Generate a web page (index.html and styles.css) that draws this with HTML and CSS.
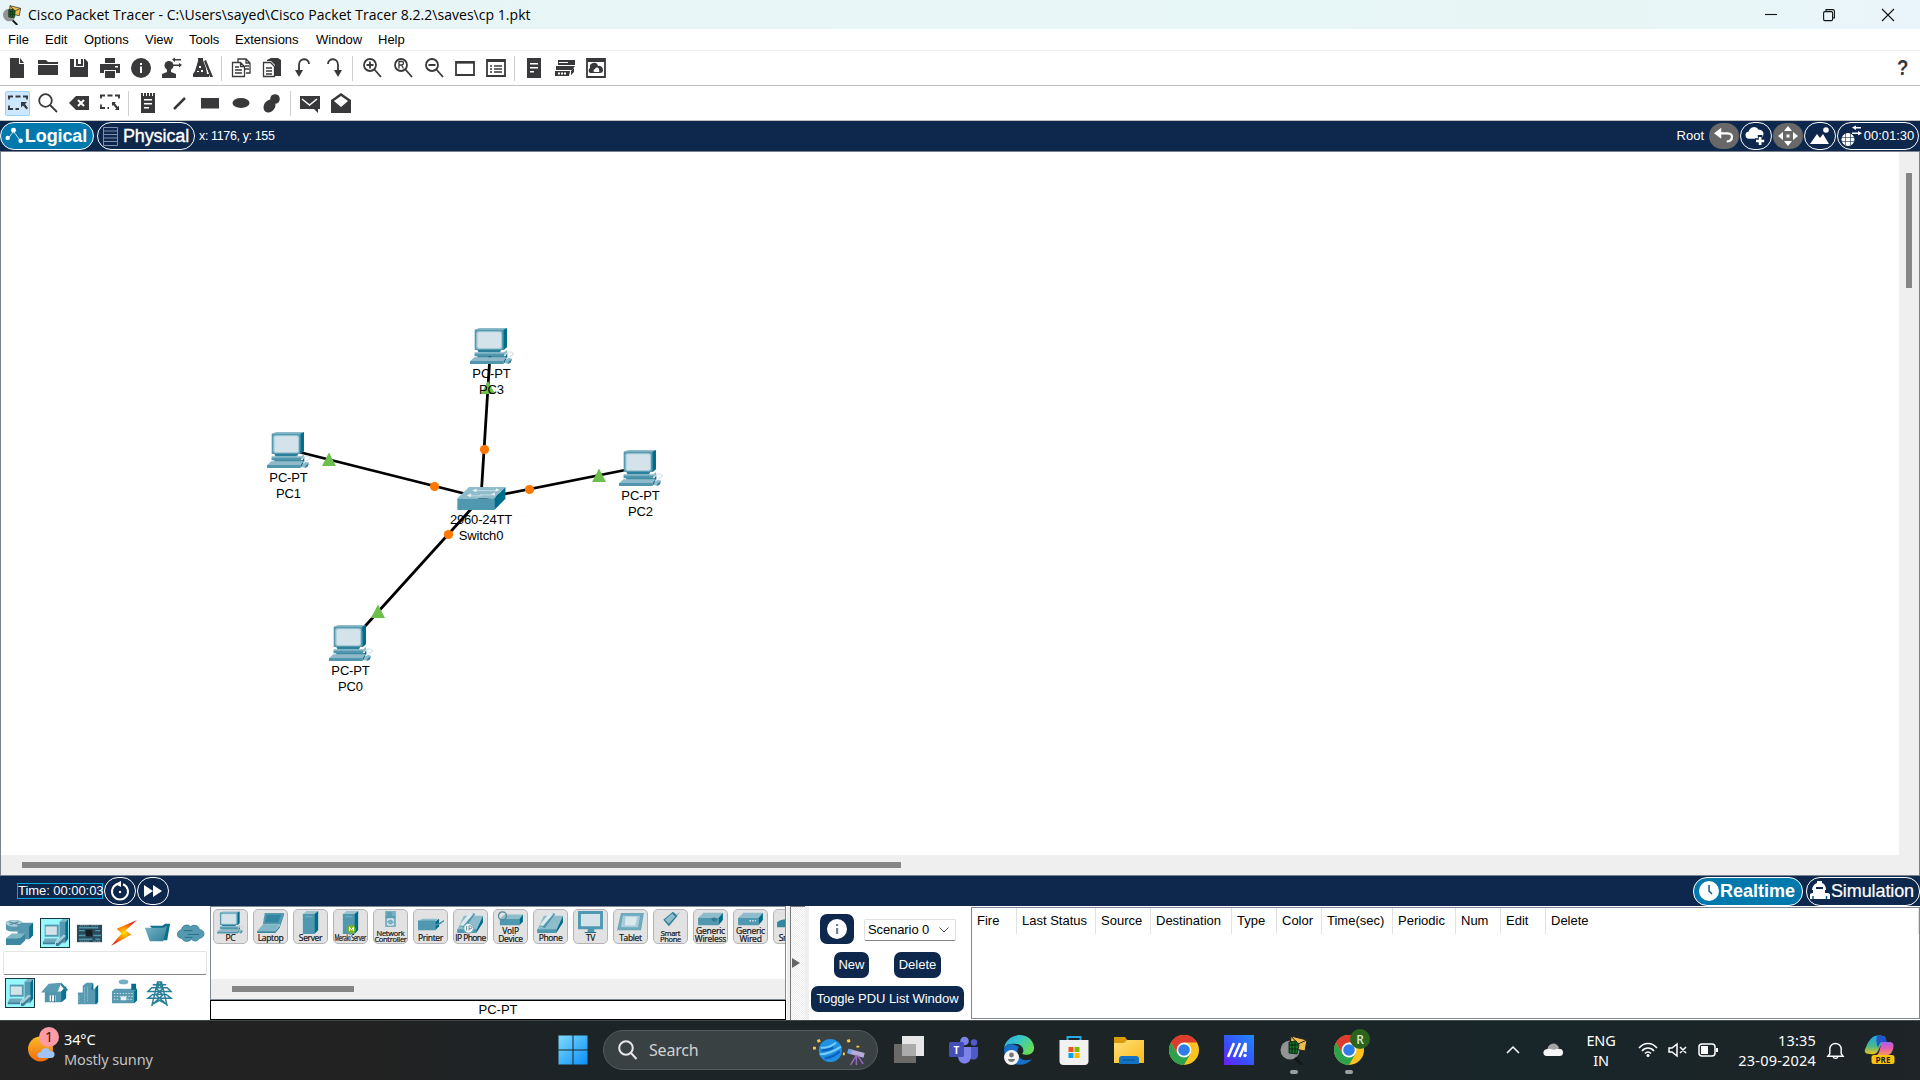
FILE: index.html
```html
<!DOCTYPE html>
<html lang="en">
<head>
<meta charset="utf-8">
<title>Cisco Packet Tracer</title>
<link rel="stylesheet" href="styles.css">
</head>
<body>
<svg class="defs" width="0" height="0" aria-hidden="true">
  <defs>
    <linearGradient id="lgTeal" x1="0" y1="0" x2="1" y2="1"><stop offset="0" stop-color="#79b4c6"/><stop offset="1" stop-color="#2d7f9a"/></linearGradient>
    <linearGradient id="lgWin" x1="0" y1="0" x2="1" y2="1"><stop offset="0" stop-color="#7fdcff"/><stop offset="1" stop-color="#0a8ef5"/></linearGradient>
    <linearGradient id="lgSun" x1="0" y1="0" x2="0" y2="1"><stop offset="0" stop-color="#fbb92a"/><stop offset="1" stop-color="#ef6c0f"/></linearGradient>
    <linearGradient id="lgFolder" x1="0" y1="0" x2="1" y2="1"><stop offset="0" stop-color="#ffe07a"/><stop offset="1" stop-color="#f9b918"/></linearGradient>
    <linearGradient id="lgM" x1="1" y1="0" x2="0" y2="1"><stop offset="0" stop-color="#1d8bff"/><stop offset=".6" stop-color="#3a4cf8"/><stop offset="1" stop-color="#6a1df5"/></linearGradient>
    <linearGradient id="lgEdge" x1="0" y1="0" x2="1" y2=".5"><stop offset="0" stop-color="#2aa8e8"/><stop offset=".5" stop-color="#38c7c8"/><stop offset="1" stop-color="#63dc5a"/></linearGradient>
    <linearGradient id="lgCopA" x1="0" y1="0" x2="0" y2="1"><stop offset="0" stop-color="#22a4ee"/><stop offset=".55" stop-color="#46b98a"/><stop offset="1" stop-color="#f3c21b"/></linearGradient>
    <linearGradient id="lgCopB" x1="0" y1="0" x2="0" y2="1"><stop offset="0" stop-color="#a95df0"/><stop offset=".5" stop-color="#e65fae"/><stop offset="1" stop-color="#f79a5c"/></linearGradient>
    <radialGradient id="rgBolt"><stop offset="0" stop-color="#ffe600"/><stop offset=".45" stop-color="#ff8a00"/><stop offset="1" stop-color="#e8281a"/></radialGradient>
    <symbol id="pc" viewBox="0 0 132 108">
      <path fill="#8fbccb" d="M14 6 27 0h84l-11 6z"/><path fill="#5799b0" d="M14 5h87v61H14z"/><path fill="#006e8a" d="M100 5l11-5v58l-11 9z"/>
      <rect x="19" y="10" width="77" height="53" rx="6" fill="#a6cbd7"/><rect x="23" y="13" width="70" height="47" rx="5" fill="#d3e3e9"/>
      <path fill="#2b809b" d="M22 66h72l-5 8H26z"/><path fill="#8fbccb" d="M14 73h88l9-7v9l-9 8H14z"/><path fill="#4f96ae" d="M14 77h88v8H14z"/><path fill="#12708c" d="M22 85h84l6-10v14H22z"/>
      <path fill="#8fb9c8" d="M13 88h96l-8 12H0z"/><path fill="#4f96ae" d="M0 99h101v9H0z"/><path fill="#17728e" d="M101 99l8-11v9l-8 11z"/>
      <path fill="#8fb9c8" d="M105 98l11-9 10 3-4 11-7 5-10-3z"/><path fill="#2b809b" d="M115 102l10-9-2 10-8 5z"/><path fill="none" stroke="#b8d3dd" stroke-width="2.5" d="M112 73c8-2 18-1 18 5 0 5-11 4-12 10"/>
    </symbol>
    <symbol id="switch" viewBox="0 0 148 70">
      <path fill="#8fbccb" d="M0 35 36 0h111l-34 35z"/><path fill="#4f98b0" d="M0 35h113v35H0z"/><path fill="#006e8a" d="M113 35 147 0v36l-34 34z"/>
      <path fill="none" stroke="#c3dbe3" stroke-width="3" d="M50 11h40M68 24h40M34 27h40M90 11h32"/><path fill="#e9f3f6" d="M60 5 46 10l12 6zM114 17l-11 5 12 5zM43 20l-14 5 12 6zM119 4l10 6-14 4z"/>
    </symbol>
    <symbol id="endpc" viewBox="0 0 30 30">
      <path fill="#80b7c8" d="M20 3l3-3h6v22l-3 4h-6z"/><path fill="#5799b0" d="M20 3h6v22h-6z"/><path fill="#006e8a" d="M26 4l3-4v21l-3 4z"/><path fill="#5799b0" d="M4 6h15v13H4z"/><rect x="5" y="8" width="12" height="9" fill="#d3e3e9"/><path fill="#71a9bc" d="M4 21h14l-3 4H2z"/><path fill="#417f98" d="M2 25h13v2H2zM16 26l9-8 2 2-8 9h-3z"/><path fill="#a9cdd8" d="M15 25l9-8 3 1-9 8z"/>
    </symbol>
    <symbol id="tower" viewBox="0 0 20 24"><path fill="#9bc3d0" d="M2 3l4-3h12l-4 3z"/><path fill="#4f98b0" d="M2 3h12v21H2z"/><path fill="#006e8a" d="M14 3l4-3v20l-4 4z"/><path stroke="#7db2c4" d="M4 6h8"/></symbol>
    <symbol id="box" viewBox="0 0 28 14"><path fill="#8fbccb" d="M0 6l6-6h22l-5 6z"/><path fill="#4f98b0" d="M0 6h23v8H0z"/><path fill="#006e8a" d="M23 6l5-6v8l-5 6z"/></symbol>
    <symbol id="phone" viewBox="0 0 28 24"><path fill="#8fbccb" d="M7 5h20l-7 15H0z"/><path fill="#4f98b0" d="M0 19h20v4H0z"/><path fill="#006e8a" d="M20 20 27 5v7l-7 11z"/><path fill="#4f98b0" d="M4 16 16 2l3 1L8 18z"/><path fill="#dce9ee" d="M3 14 14 1l3 2L6 16z"/></symbol>
    <symbol id="chrome" viewBox="0 0 30 30"><circle cx="15" cy="15" r="15" fill="#fcc31e"/><path fill="#de3a2e" d="M2 7.5A15 15 0 0 1 28 7.5H15L8.5 18.7z"/><path fill="#2da14c" d="M2 7.5A15 15 0 0 0 15 30l6.5-11.3L8.5 18.7z"/><circle cx="15" cy="15" r="7.4" fill="#fff"/><circle cx="15" cy="15" r="5.8" fill="#2f7de9"/></symbol>
    <symbol id="tracer" viewBox="0 0 30 30"><circle cx="11" cy="15" r="9.5" fill="#909493"/><path fill="#eebb50" stroke="#222" d="M12 1l16 4-2 11-15-3z"/><path fill="none" stroke="#222" d="M12 1l7 8 9-4"/><path fill="#0b7a22" stroke="#111" stroke-width=".8" d="M10 7l7-1 3 4-2 9-8-1z"/><path stroke="#111" stroke-width=".8" d="M13 7v11M16 7v11M10 10h9M10 14h9"/><path stroke="#161616" stroke-width="3" d="M16 23l7 7"/></symbol>
  </defs>
</svg>

<header class="titlebar">
  <svg class="appicon" viewBox="0 0 30 30"><use href="#tracer"/></svg>
  <h1>Cisco Packet Tracer - C:\Users\sayed\Cisco Packet Tracer 8.2.2\saves\cp 1.pkt</h1>
  <div class="wincontrols">
    <svg viewBox="0 0 12 12"><path d="M0 5.500h12"/></svg>
    <svg viewBox="0 0 12 12"><rect x=".6" y="2.6" width="9" height="9" rx="1.3"/><path d="M3 2.4V.6h6.8a1.6 1.6 0 0 1 1.6 1.6V9H9.8"/></svg>
    <svg viewBox="0 0 12 12"><path d="M0 0l12 12M12 0 0 12"/></svg>
  </div>
</header>

<nav class="menubar"><span class="m-file">File</span><span class="m-edit">Edit</span><span class="m-options">Options</span><span class="m-view">View</span><span class="m-tools">Tools</span><span class="m-ext">Extensions</span><span class="m-window">Window</span><span>Help</span></nav>

<div class="toolbar">
  <i class="tool"><svg viewBox="0 0 20 20"><path d="M3 0h9v6h5v14H3zM13 0l4 5h-4z"/></svg></i>
  <i class="tool"><svg viewBox="0 0 20 20"><path d="M0 2h8l2 2h10v2H0zM0 7h20v10H0z"/></svg></i>
  <i class="tool"><svg viewBox="0 0 20 20"><path d="M1 1h4v8h10V1h1l3 3v15H1zM7 1h2v5h3V1h2v7H7z"/></svg></i>
  <i class="tool"><svg viewBox="0 0 20 20"><path d="M5 0h10v5H5zM0 6h20v9h-4v-3H4v3H0zM5 13h10v7H5z"/><path class="cut" d="M15 8h3v1.5h-3z"/></svg></i>
  <i class="tool"><svg viewBox="0 0 20 20"><circle cx="10" cy="10" r="10"/><path class="cut" d="M9 5h2v2H9zM9 8.500h2V15H9z"/></svg></i>
  <i class="tool"><svg viewBox="0 0 20 20"><circle cx="7" cy="7.500" r="4.500"/><path d="M5 10h4v4l5 2v4H0v-4l5-2zM10 1.500l3-2v1.500h6v1.500h-6V4zM20 7l-3-2v1.500h-6V8h6v1.500z"/></svg></i>
  <i class="tool"><svg viewBox="0 0 20 20"><path d="M5 0h5v2l4 11 2 3v3H0v-3l2-3 3-10zM11 3l2-1 7 17h-3z"/><path class="cut" d="M6 8h2v2H6zM8 12h2v2H8zM4 13h2v1H4zM13 9l3 7h-2z"/></svg></i>
  <i class="sep"></i>
  <i class="tool"><svg viewBox="0 0 20 20"><path class="ln" d="M7 4V1h8l4 4v10h-4M1.500 4.500h8l4 4v10h-12zM15 1v4h4M9.500 4.500v4h4M4 9h4M4 12h7M4 15h7M14 8h4M14 11h4"/></svg></i>
  <i class="tool"><svg viewBox="0 0 20 20"><path d="M5 2l4-2h7l3 2v16h-6V7L9 3H5z"/><path class="ln" d="M1.500 4.500h7l4 4v10h-11zM4 10h6M4 13h6M4 16h6"/></svg></i>
  <i class="tool"><svg viewBox="0 0 20 20"><path class="ln2" d="M6 15V7c0-8 10-7 10-1"/><path d="M2 12h8l-4 7z"/></svg></i>
  <i class="tool"><svg viewBox="0 0 20 20"><path class="ln2" d="M14 15V7C14-1 4 0 4 6"/><path d="M10 12h8l-4 7z"/></svg></i>
  <i class="sep"></i>
  <i class="tool"><svg viewBox="0 0 20 20"><circle class="ln2" cx="8" cy="7" r="6"/><path class="ln2" d="M12 11l7 8M4.500 7h7M8 3.500v7"/></svg></i>
  <i class="tool"><svg viewBox="0 0 20 20"><circle class="ln2" cx="8" cy="7" r="6"/><path class="ln2" d="M12 11l7 8"/><path class="ln" d="M6 10.500v-7h3c2 0 2 3 0 3.500H6M8.500 7l2 3.500"/></svg></i>
  <i class="tool"><svg viewBox="0 0 20 20"><circle class="ln2" cx="8" cy="7" r="6"/><path class="ln2" d="M12 11l7 8M4.500 7h7"/></svg></i>
  <i class="tool"><svg viewBox="0 0 20 20"><path class="ln2" d="M1 4h18v13H1z"/><path class="ln" d="M1 5h18"/></svg></i>
  <i class="tool"><svg viewBox="0 0 20 20"><path class="ln2" d="M1 2h18v16H1zM1 3h18"/><path class="ln" d="M4 8h2M8 8h8M4 11h2M8 11h8M4 14h2M8 14h8"/></svg></i>
  <i class="sep"></i>
  <i class="tool"><svg viewBox="0 0 20 20"><path d="M3 0h14v20H3z"/><path class="cut" d="M6 5h8v1.500H6zM6 9h8v1.500H6zM6 13h4v1.500H6z"/></svg></i>
  <i class="tool"><svg viewBox="0 0 20 20"><path d="M3 2h17v5H3zM1 8h19l-3 4H1zM0 13h15l-1 5H0zM16 13l3-3v4l-3 3z"/><path class="cut" d="M4 4h9v1H4zM3 14.500h2v2H3zM6 14.500h2v2H6zM9 14.500h2v2H9z"/></svg></i>
  <i class="tool"><svg viewBox="0 0 20 20"><path class="ln2" d="M1 1h18v18H1zM1 3h18"/><path d="M4 15a3 3 0 0 1 0-5 4 4 0 0 1 8-2 4 4 0 0 1 5 4c0 2-1 3-3 3z"/><path class="cut" d="M8 14a2 2 0 0 1 1-3 2 2 0 0 1 4 1 1.500 1.500 0 0 1 0 2z"/></svg></i>
  <b class="help">?</b>
</div>

<div class="toolbar second">
  <i class="tool selected"><svg viewBox="0 0 20 20"><path class="ln2 dash" d="M0 3.500h20M0 16h11"/><path class="ln2" d="M1 3v3.500M1 12.500v4M19 3v3.500"/><path d="M13 9h6l-2 2 3 4-1.500 1.500-3.500-4-2 2z"/></svg></i>
  <i class="tool"><svg viewBox="0 0 20 20"><circle class="ln2" cx="7.500" cy="7.500" r="6.300"/><path class="ln2" d="M12 12l7 7"/></svg></i>
  <i class="tool"><svg viewBox="0 0 20 20"><path d="M0 10l7-7h13v14H7z"/><path class="x" d="M9 7l6 6M15 7l-6 6"/></svg></i>
  <i class="tool"><svg viewBox="0 0 20 20"><path class="ln2 dash" d="M0 2.500h20M0 15h9"/><path class="ln2" d="M1 2v3.500M1 11.500v4M19 2v3.500"/><path d="M12 9h4l-1.200 1.200 3 3.800L19 12.500V17h-4l1.200-1.500-3-3.500L12 13z"/></svg></i>
  <i class="sep"></i>
  <i class="tool"><svg viewBox="0 0 20 20"><path d="M3 0h2v3h1V0h2v3h1V0h2v3h1V0h2v3h1V0h2v20H3z"/><path class="cut" d="M6 6h8v1.500H6zM6 10h8v1.500H6zM6 14h5v1.500H6z"/></svg></i>
  <i class="tool"><svg viewBox="0 0 20 20"><path class="ln3" d="M5 16 16 5"/></svg></i>
  <i class="tool"><svg viewBox="0 0 20 20"><path d="M1 5h18v10.500H1z"/></svg></i>
  <i class="tool"><svg viewBox="0 0 20 20"><ellipse cx="10" cy="10" rx="8.500" ry="5"/></svg></i>
  <i class="tool"><svg viewBox="0 0 20 20"><circle cx="13" cy="6" r="4.800"/><ellipse cx="7.500" cy="13" rx="7" ry="5.500" transform="rotate(-55 7.500 13)"/></svg></i>
  <i class="sep"></i>
  <i class="tool"><svg viewBox="0 0 20 20"><path d="M0 3h20v13h-2v4l-4-4H0z"/><path class="cutln" d="M2 6l7.500 6L17 6"/></svg></i>
  <i class="tool"><svg viewBox="0 0 20 20"><path d="M0 7l10-7 10 7v13H0z"/><path class="cut" d="M3 8l7-5 7 5-7 6z"/></svg></i>
</div>

<div class="navbar">
  <div class="pill active logical"><svg viewBox="0 0 20 18"><path class="wl" d="M4 11 9 4l7 10"/><circle cx="2.800" cy="11" r="2.300"/><circle cx="9" cy="3" r="2.600"/><circle cx="16.500" cy="14" r="2.400"/></svg><b>Logical</b></div>
  <div class="pill physical"><svg viewBox="0 0 15 19"><path class="rack" d="M.5.5h14v18H.5zM.5 4h14M.5 7.500h14M.5 11h14M.5 14.500h14"/></svg><span>Physical</span></div>
  <span class="coords">x: 1176, y: 155</span>
  <div class="navright">
    <span class="root">Root</span>
    <div class="pill gray"><svg viewBox="0 0 22 18"><path class="wl3" d="M6 6h9c7 0 6 9-1 9"/><path d="M0 6l8-6v12z"/></svg></div>
    <div class="pill icon"><svg viewBox="0 0 22 20"><path d="M4 13a4 4 0 0 1-1-8 6 6 0 0 1 11-2c4 0 6 3 5 6-1 3-2 4-5 4z"/><path class="plusgap" d="M15.500 9v11M10 15h11"/><path class="plus" d="M15.500 11v9M11 15.500h9"/></svg></div>
    <div class="pill gray"><svg viewBox="0 0 20 20"><path d="M10 0l4 5H6zM10 20l4-5H6zM0 10l5-4v8zM20 10l-5-4v8zM8.500 8.500h3v3h-3z"/></svg></div>
    <div class="pill icon"><svg viewBox="0 0 20 18"><path d="M0 17 7 7l3 4 3-4 6 10z"/><circle cx="16" cy="3" r="2.800"/></svg></div>
    <div class="pill clock"><svg viewBox="0 0 20 20"><circle cx="6" cy="13.500" r="6.500"/><path class="globe" d="M0 11.500h12M0 15.500h12M3.500 7v12M8.500 7v12"/><path d="M10 1.500l4-2V1h5v1.400h-5V4zM20 7.200l-4-2.300v1.500h-6v1.500h6v1.500z"/></svg><span>00:01:30</span></div>
  </div>
</div>

<main class="workspace">
  <div class="canvas">
    <svg class="links" width="1897" height="703" viewBox="1 152 1897 703">
      <path class="cable" d="M285 448.500 482 498M490 355 481 498M638 467.500 482 498.500M348 645 482 497"/>
      <g fill="#ff7800"><circle cx="434.500" cy="486.500" r="4.600"/><circle cx="484.500" cy="449.500" r="4.600"/><circle cx="529.500" cy="489.500" r="4.600"/><circle cx="448.500" cy="534.500" r="4.600"/></g>
      <path fill="#6cbf4b" d="M329 452.500l7 13.500h-14zM488 381l7 13h-14zM599 468.500l7 13.500h-14zM378 604.500l7 13.500h-14z"/>
    </svg>
    <div class="node n-pc3"><svg viewBox="0 0 132 108"><use href="#pc"/></svg><span>PC-PT</span><span>PC3</span></div>
    <div class="node n-pc1"><svg viewBox="0 0 132 108"><use href="#pc"/></svg><span>PC-PT</span><span>PC1</span></div>
    <div class="node n-pc2"><svg viewBox="0 0 132 108"><use href="#pc"/></svg><span>PC-PT</span><span>PC2</span></div>
    <div class="node n-pc0"><svg viewBox="0 0 132 108"><use href="#pc"/></svg><span>PC-PT</span><span>PC0</span></div>
    <div class="node n-sw"><svg viewBox="0 0 148 70"><use href="#switch"/></svg><span>2960-24TT</span><span>Switch0</span></div>
  </div>
  <div class="vtrack"><div class="vthumb"></div></div>
  <div class="htrack"><div class="hthumb"></div></div>
</main>

<div class="timebar">
  <span class="time">Time: 00:00:03</span>
  <div class="pill icon"><svg viewBox="0 0 20 20"><path class="wl2" d="M7 3.200A8 8 0 1 0 13 3.200"/><path d="M5 3l6-3v6z"/><circle cx="10" cy="11" r="1.200"/></svg></div>
  <div class="pill icon"><svg viewBox="0 0 20 20"><path d="M1 4l9 6-9 6zM10 4l9 6-9 6z"/></svg></div>
  <div class="modes">
    <div class="pill active realtime"><svg viewBox="0 0 20 20"><circle cx="10" cy="10" r="10"/><path class="hands" d="M10 4v6l3 3"/></svg><b>Realtime</b></div>
    <div class="pill simulation"><svg viewBox="0 0 20 20"><path fill-rule="evenodd" d="M7 0h5v2c3 1 4 4 4 7h-1v3h3l2 1v5H0v-5l2-1h1V9H2c0-3 2-6 5-7zM6 6v2h7V6z"/><path class="hands" d="M3 15v3M16.500 15v3"/></svg><span>Simulation</span></div>
  </div>
</div>

<section class="bottom">
  <div class="categories">
    <div class="catrow">
      <i class="c35"><svg viewBox="0 0 30 30"><path fill="#5799b0" d="M1 4c0-4 17-4 17 0v6c0 4-17 4-17 0z"/><ellipse cx="9.500" cy="4.500" rx="8.500" ry="3.500" fill="#a9cdd8"/><path stroke="#487f91" d="M4 3l11 3M5 6l9-3"/><path fill="#5799b0" d="M13 7l4-3h12v12l-4 5H13z"/><path fill="#0e718d" d="M25 8l4-4v13l-4 4z"/><path fill="#80b7c8" d="M1 20l6-5h14l-5 5z"/><path fill="#3d89a3" d="M1 20h15v7H1zM16 20l5-5v7l-5 5z"/></svg></i>
      <i class="c35 on"><svg viewBox="0 0 30 30"><use href="#endpc"/></svg></i>
      <i class="c35"><svg viewBox="0 0 30 30"><path fill="#294b5b" d="M2 6h26v18H2z"/><path stroke="#4f98b0" stroke-width="1.500" d="M4 9h20M4 12h6M4 17h9M4 21h14M21 12h5M19 17h8M21 21h5"/><path fill="#171f25" d="M11 11h7v7h-7z"/><path stroke="#9ab8c0" stroke-dasharray="1 1" d="M5 7h9M17 7h8M5 23h10M19 23h8"/></svg></i>
      <i class="c33"><svg viewBox="0 0 30 30"><path fill="url(#rgBolt)" d="M29 1 8 10l5 5L2 28l21-12-6-4z"/></svg></i>
      <i class="c34"><svg viewBox="0 0 30 30"><path fill="#0b6f8b" d="M7 7h13l3-2h5l-3 17h-4z"/><path fill="url(#lgTeal)" d="M2 9h19l4-2-4 16H7z"/></svg></i>
      <i class="c34"><svg viewBox="0 0 30 30"><path fill="#5799b0" stroke="#35809a" d="M5 20c-6 0-6-8 0-9 0-5 7-6 9-3 4-3 9-1 9 3 6 0 7 8 0 9-2 4-6 3-8 1-3 3-8 3-10-1z"/><path stroke="#256f8a" d="M7 12h9M11 16h12M8 19h8"/></svg></i>
    </div>
    <div class="filter"></div>
    <div class="catrow lower">
      <i class="c35 on"><svg viewBox="0 0 30 30"><use href="#endpc"/></svg></i>
      <i class="c35"><svg viewBox="0 0 30 30"><path fill="#4f98b0" d="M5 13h17l5-6v13l-5 4H5z"/><path fill="#0e718d" d="M22 13l5-5v12l-5 4z"/><path fill="#2b7d99" d="M22 4l7 7-2 2-6-7z"/><path fill="#5a9cb2" d="M1 14 9 5l13-1-4 10z"/><path fill="#fff" d="M10 17h6v6h-6z"/><path stroke="#35738b" d="M12 17v6M15 17v7"/></svg></i>
      <i class="c35"><svg viewBox="0 0 30 30"><path fill="#5799b0" d="M3 14h8v12H3zM8 7l4-3h6v22H8zM16 10h7v16h-7z"/><path fill="#006e8a" d="M18 4l1 1v5l-2 2zM21 9l3-3v18l-3 2z"/><path stroke="#a9cdd8" stroke-dasharray="1 1" d="M10 9v15M13 8v16M4 17v7"/></svg></i>
      <i class="c35"><svg viewBox="0 0 30 30"><ellipse cx="14" cy="3" rx="5" ry="2.500" fill="#75afc1"/><path fill="#5799b0" d="M2 13l3-3h23v12l-3 3H2z"/><path fill="#006e8a" d="M22 5h5v6h-5zM25 13l3-3v12l-3 3z"/><path stroke="#cce0e7" stroke-dasharray="1.500 1.500" d="M4 15h20M4 18h20M4 21h6M18 21h6"/><path fill="#e9f1f4" d="M11 18h6v4h-6z"/></svg></i>
      <i class="c35"><svg viewBox="0 0 30 30"><path fill="none" stroke="#277f98" stroke-width="1.500" d="M7 28 13 3l4 0 6 25M8 6l14 0M3 13h24l-4-4H7zM3 20h24l-5-4H8zM12 10l6 6M18 10l-6 6M11 16l10 9M19 16 9 25M8 26l7-4 7 4M13 4l5 5M17 4l-5 5"/></svg></i>
    </div>
  </div>

  <div class="devices">
    <div class="tiles">
      <div class="tile"><svg viewBox="0 0 28 24"><use href="#pc"/></svg><span>PC</span></div>
      <div class="tile"><svg viewBox="0 0 28 24"><path fill="#5799b0" d="M8 2h20l-4 12H6z"/><path fill="#3286a1" d="M10 4h15l-3 8H8z"/><path fill="#006e8a" d="M28 2v2l-4 12v-2z"/><path fill="#80b7c8" d="M6 14h18l-5 7H0z"/><path fill="#3585a0" d="M0 21h19v2H0zM19 21l5-6v2l-5 6z"/></svg><span>Laptop</span></div>
      <div class="tile"><svg viewBox="0 0 20 24"><use href="#tower"/></svg><span>Server</span></div>
      <div class="tile"><svg viewBox="0 0 20 24"><use href="#tower"/><circle cx="11" cy="19" r="4.500" fill="#7cb518"/><path fill="none" stroke="#fff" d="M9 21v-4l2 3 2-3v4"/></svg><span class="tight">Meraki Server</span></div>
      <div class="tile two"><svg viewBox="0 0 20 24"><path fill="#75afc1" d="M2 0h16v24H2z"/><path fill="none" stroke="#2c7f9a" d="M4 3h8M4 6h8M2 9h16"/><path fill="none" stroke="#fff" stroke-width="1.500" d="M6 15v-3h8v4M14 18v3H6v-4"/></svg><span class="small">Network<br>Controller</span></div>
      <div class="tile"><svg viewBox="0 0 28 24"><path fill="#8fbccb" d="M1 10l5-2h16l-4 3z"/><path fill="#4f98b0" d="M1 10h18v10H1z"/><path fill="#006e8a" d="M19 11l4-3v8l-4 4z"/><path stroke="#4f98b0" stroke-width="1.500" d="M19 15l5-2 4-3"/></svg><span>Printer</span></div>
      <div class="tile"><svg viewBox="0 0 28 24"><use href="#phone"/><circle cx="12" cy="18" r="5" fill="#fff" stroke="#6aa5b8"/><path stroke="#4d8498" fill="none" d="M10 15.500v5M12.500 20.500v-5h1.500a1 1 0 0 1 0 3h-1.500"/></svg><span class="mid">IP Phone</span></div>
      <div class="tile two"><svg viewBox="0 0 28 18"><path fill="#8fbccb" d="M2 9l5-5h21l-4 5z"/><path fill="#4f98b0" d="M2 9h22v7H2z"/><path fill="#006e8a" d="M24 9l4-5v8l-4 4z"/><circle cx="5" cy="5.500" r="4.500" fill="none" stroke="#50879a" stroke-width="1.500"/></svg><span>VoIP<br>Device</span></div>
      <div class="tile"><svg viewBox="0 0 28 24"><use href="#phone"/></svg><span>Phone</span></div>
      <div class="tile"><svg viewBox="0 0 28 24"><path fill="#4f98b0" d="M1 0h26v19H1zM11 19h7v3h-7z"/><path fill="#d3e3e9" d="M4 3h20v13H4z"/><path fill="#206f8a" d="M8 22h12v1H8z"/></svg><span>TV</span></div>
      <div class="tile"><svg viewBox="0 0 28 24"><path fill="#6eaabd" d="M4 2h24l-3 18H0z"/><path fill="#a9cdd8" d="M6 5h18l-2 12H4z"/><path fill="#dbe8ed" d="M9 6h12l-2 9H8z"/></svg><span>Tablet</span></div>
      <div class="tile two"><svg viewBox="0 0 28 20"><path fill="#2b809b" d="M5 11 17 1l6 5-11 13z"/><path fill="#8fbccb" d="M7 11l9-8 4 4-8 9z"/><path stroke="#6c98a7" d="M21 6l4-4"/></svg><span class="small">Smart<br>Phone</span></div>
      <div class="tile two"><svg viewBox="0 0 28 18"><use href="#box"/><path stroke="#1d6176" d="M16 8v3M18 7v5M20 8v3"/></svg><span>Generic<br>Wireless</span></div>
      <div class="tile two"><svg viewBox="0 0 28 18"><use href="#box"/><path stroke="#e3eef2" stroke-width="1.500" stroke-dasharray="1.500 1.500" d="M13 11h7"/></svg><span>Generic<br>Wired</span></div>
      <div class="tile"><svg viewBox="0 0 28 24"><path fill="#3286a1" d="M0 12c2-5 24-5 26 0v5H0z"/></svg><span>Sniffer</span></div>
    </div>
    <div class="dtrack"><div class="dthumb"></div></div>
    <div class="devname">PC-PT</div>
  </div>

  <div class="splitter"><i></i></div>

  <div class="scenario">
    <div class="srow first"><div class="infobtn"><svg viewBox="0 0 20 20"><circle cx="10" cy="10" r="10" fill="#fff"/><path fill="#718096" d="M9 5h2.200v2H9zM9 9h2.200v6H9z"/></svg></div>
      <div class="select"><span>Scenario 0</span><svg viewBox="0 0 10 6"><path d="M.5.5 5 5 9.500.5"/></svg></div></div>
    <div class="srow second"><button class="btn new">New</button><button class="btn del">Delete</button></div>
    <button class="btn toggle">Toggle PDU List Window</button>
  </div>

  <div class="pdu"><span>Fire</span><span>Last Status</span><span>Source</span><span>Destination</span><span>Type</span><span>Color</span><span>Time(sec)</span><span>Periodic</span><span>Num</span><span>Edit</span><span>Delete</span></div>
</section>

<footer class="taskbar">
  <div class="weather">
    <svg viewBox="0 0 33 36"><circle cx="13.500" cy="22" r="12.500" fill="url(#lgSun)"/><path fill="#9fc2f7" d="M14 31c-5 0-5-6 0-6 1-5 8-5 9-1 6-1 6 7 1 7z"/><circle cx="22" cy="10" r="10" fill="#fe9aa4"/><text x="22" y="15" text-anchor="middle">1</text></svg>
    <div><p>34°C</p><p class="dim">Mostly sunny</p></div>
  </div>
  <div class="apps">
    <i class="app"><svg viewBox="0 0 30 30"><path fill="url(#lgWin)" d="M.5.5h14v14H.5zM15.500.5h14v14h-14zM.5 15.500h14v14H.5zM15.500 15.500h14v14h-14z"/></svg></i>
    <div class="search"><svg class="mag" viewBox="0 0 20 20"><circle cx="8" cy="8" r="6.800"/><path d="M13 13l5.500 6"/></svg><span>Search</span>
      <svg class="planet" viewBox="0 0 56 30"><circle cx="18" cy="15" r="12" fill="#2090e2"/><path fill="none" stroke="#74d0fb" stroke-width="2" d="M8 12c7 1 11-2 16-5M7 19c9 0 16-4 22-8"/><path fill="none" stroke="#0c63bd" stroke-width="2.500" d="M9 15c5 0 9-1 12-3M12 23c6 0 12-4 16-7"/><path fill="#f9c846" d="M4 4l3-1 1 3-3 1zM0 11h3v3H0zM35 4l3-1 1 3-3 1zM45 10h3v2h-3zM31 17h2v3h-2z"/><path stroke="#b6a9dc" stroke-width="5" d="M38 16l15 4"/><path stroke="#6da1ec" stroke-width="5" d="M36 15.500l4 1"/><path fill="none" stroke="#956cc0" stroke-width="1.500" d="M45 20l-6 10M45 20v10M46 20l6 9"/></svg></div>
    <i class="app"><svg viewBox="0 0 30 30"><path fill="#6c6a69" d="M0 9h22v19H0z"/><path fill="#e6e6e6" d="M8 1h22v20H8z"/><path fill="#ababab" d="M8 9h14v12H8z"/></svg></i>
    <i class="app"><svg viewBox="0 0 30 30"><circle cx="15.500" cy="6" r="4.300" fill="#7b83eb"/><circle cx="25" cy="7.500" r="3.200" fill="#5059c9"/><path fill="#5059c9" d="M20 12h9v8c0 6-8 6-9 1z"/><path fill="#7b83eb" d="M9 12h13v9c0 10-13 10-13 0z"/><rect y="7" width="15" height="15" rx="1.500" fill="#464eb8"/><text class="tm" x="7.500" y="18.500" text-anchor="middle">T</text></svg></i>
    <i class="app"><svg viewBox="0 0 30 30"><path fill="#176fc9" d="M0 15C0 9 9 7 15 12c-3 4-2 11 5 13 4 1 7-1 8-1C21 34 1 31 0 15z"/><path fill="url(#lgEdge)" d="M0 13C3-4 28-4 30 12c1 7-7 9-12 7 3-3 1-9-5-10C7 8 2 9 0 13z"/><circle cx="7.500" cy="22.500" r="7.500" fill="#f5f5f5"/><circle cx="7.500" cy="20" r="2.400" fill="#777"/><path fill="#777" d="M4 24h7c0 4-7 4-7 0z"/></svg></i>
    <i class="app"><svg viewBox="0 0 30 30"><path fill="none" stroke="#28a8e8" stroke-width="2" d="M8.500 7V2h13v5"/><path fill="#f1f1f1" d="M.5 5h29v21a4 4 0 0 1-4 4h-21a4 4 0 0 1-4-4z"/><path fill="#f25022" d="M9.500 12h5v5h-5z"/><path fill="#7fba00" d="M15.500 12h5v5h-5z"/><path fill="#00a4ef" d="M9.500 18h5v5h-5z"/><path fill="#ffb900" d="M15.500 18h5v5h-5z"/></svg></i>
    <i class="app"><svg viewBox="0 0 30 30"><path fill="#d99a0c" d="M0 2h11l3 4h14v8H0z"/><path fill="url(#lgFolder)" d="M0 8h10l3-3h17v23H0z"/><path fill="#1273c4" d="M5 24a3 3 0 0 1 3-3h14a3 3 0 0 1 3 3v5H5z"/><path stroke="#0b4e8e" d="M9 25h12"/></svg></i>
    <i class="app"><svg viewBox="0 0 30 30"><use href="#chrome"/></svg></i>
    <i class="app"><svg viewBox="0 0 30 30"><path fill="url(#lgM)" d="M0 0h30v30H0z"/><path fill="none" stroke="#fff" stroke-width="2.600" d="M4 22 10 8M10 22l6-14M15.500 22l6-14v9"/><circle cx="21" cy="20.500" r="1.700" fill="#fff"/></svg></i>
    <i class="app running"><svg viewBox="0 0 30 30"><use href="#tracer"/></svg></i>
    <i class="app running"><svg viewBox="0 0 30 30"><use href="#chrome" width="30" height="30"/><circle cx="26" cy="4" r="10" fill="#2b641d"/><text class="rb" x="26" y="8.500" text-anchor="middle">R</text></svg></i>
  </div>
  <div class="tray">
    <svg class="chev" viewBox="0 0 14 8"><path d="M1 7l6-6 6 6"/></svg>
    <svg class="cloud" viewBox="0 0 20 14"><path fill="#a5a5a5" d="M4 9C4-1 14-2 16 5l-6 4z"/><path fill="#f6f6f6" d="M4 13c-5 0-5-7 1-7 3-1 5 2 8 0 4-1 7 0 7 3 0 3-1 4-4 4z"/></svg>
    <div class="lang">ENG<br>IN</div>
    <svg class="wifi" viewBox="0 0 20 16"><path d="M1 6C6 0 14 0 19 6M4 9C7 5 13 5 16 9M7 11.500c2-2 4-2 6 0"/><circle cx="10" cy="13.500" r="1.500"/></svg>
    <svg class="vol" viewBox="0 0 20 14"><path d="M1 5h3l5-4v12l-5-4H1zM12 4l6 6M18 4l-6 6"/></svg>
    <svg class="bat" viewBox="0 0 20 14"><rect x="1" y="1" width="16" height="12" rx="3"/><path class="fill" d="M3 3h7v8H3zM18 5h2v4h-2z"/></svg>
    <div class="clocktext">13:35<br>23-09-2024</div>
    <svg class="bell" viewBox="0 0 18 19"><path d="M3 13V8a6 6 0 0 1 12 0v5l2 2.500H1zM6.500 16c.5 2.500 4.500 2.500 5 0"/></svg>
    <svg class="copilot" viewBox="0 0 30 30"><path fill="url(#lgCopA)" d="M8 2c2-2 10-2 12 0 2 2-3 5-6 12-2 5-5 6-9 5-6 0-6-3-4-7C3 7 5 4 8 2z"/><path fill="#2354c9" d="M12 1h5c4 0 4 4 5 6h-5c-2 0-3 3-4 6-2-5-2-9-1-12z"/><path fill="url(#lgCopB)" d="M18 7h7c4 0 4 4 3 7-1 4-3 6-6 6H12c4-3 3-13 6-13z"/><rect x="6.500" y="20" width="23" height="9" rx="2.500" fill="#fcc40c"/><text x="18" y="27.500" text-anchor="middle">PRE</text></svg>
  </div>
</footer>
</body>
</html>
```

FILE: styles.css
```css
* { box-sizing: border-box; }
body {
  margin: 0; width: 1920px; height: 1080px; overflow: hidden;
  display: flex; flex-direction: column;
  font: 13px/16px "Liberation Sans", Arial, sans-serif; color: #000; background: #fff;
}
svg { display: block; flex: none; overflow: visible; }
i { font-style: normal; flex: none; }
p, h1 { margin: 0; }
.defs { position: absolute; }

.titlebar { height: 29px; flex: none; display: flex; align-items: center; padding-left: 2px; background: linear-gradient(90deg, #e8f5f8, #e7f6f5 85%, #eaf5fb); }
.appicon { width: 20px; height: 20px; }
.titlebar h1 { margin-left: 6px; font: 400 14px/20px "Open Sans", "Noto Sans", sans-serif; letter-spacing: .04px; white-space: nowrap; }
.wincontrols { margin-left: auto; display: flex; gap: 46.500px; padding-right: 26px; }
.wincontrols svg { width: 12px; height: 12px; fill: none; stroke: #111; stroke-width: 1.100; }
.wincontrols svg:nth-child(2) { margin: 0 .5px 0 -.5px; }

.menubar { height: 22px; flex: none; display: flex; align-items: center; padding: 1px 0 0 8px; border-bottom: 1px solid #ededed; }
.m-file { width: 37px; } .m-edit { width: 39px; } .m-options { width: 61px; } .m-view { width: 44px; }
.m-tools { width: 46px; } .m-ext { width: 81px; } .m-window { width: 62px; }

.toolbar { height: 35px; flex: none; display: flex; align-items: center; padding-left: 1px; border-bottom: 1px solid #bfbfbf; }
.tool { width: 31px; height: 26px; display: grid; place-items: center; }
.tool svg { width: 20px; height: 20px; fill: #39393b; }
.tool .cut { fill: #fff; }
.tool .ln, .tool .ln2, .tool .ln3, .tool .x, .tool .cutln { fill: none; stroke: #39393b; stroke-width: 1.300; }
.tool .ln2 { stroke-width: 1.800; }
.tool .ln3 { stroke-width: 2.500; }
.tool .x { stroke: #fff; stroke-width: 2; }
.tool .cutln { stroke: #fff; stroke-width: 1.500; }
.tool .dash { stroke-dasharray: 5 2.500; }
.tool.selected { width: 25px; height: 25px; margin: 0 2px 0 4px; background: #cce8ff; border: 1px solid #99d1ff; border-radius: 2px; }
.sep { width: 1px; height: 25px; margin: 0 3px; background: #cfcfcf; }
.help { margin: 0 11px 0 auto; font-size: 22px; line-height: 24px; transform: scaleX(.85); color: #39393b; }

.navbar, .timebar { height: 30px; flex: none; display: flex; align-items: center; background: #0e274c; color: #fff; }
.pill { height: 28px; display: flex; align-items: center; justify-content: center; border: 1px solid #fff; border-radius: 14px; font-size: 18px; line-height: 22px; color: #fff; flex: none; }
.pill svg { fill: #fff; width: 20px; height: 20px; }
.pill.active { background: #0279ad; }
.pill.icon { width: 32px; }
.pill.gray { width: 30px; height: 26px; background: #686868; border: 0; }
.wl, .wl2, .wl3, .rack, .plus, .plusgap, .globe, .hands { fill: none; stroke: #fff; }
.wl { stroke-width: .8; }
.wl2 { stroke-width: 2; } .wl3 { stroke-width: 2.500; } .plus { stroke-width: 3; }
.plusgap { stroke: #0e274c; stroke-width: 5; }
.globe { stroke: #0e274c; stroke-width: .6; }
.hands { stroke: #0e5c88; stroke-width: 1.500; }
.rack { stroke: #8090aa; }
.logical { width: 94px; gap: 1px; padding-right: 2px; }
.pill.logical svg { width: 19px; height: 18px; }
.logical b { letter-spacing: -.1px; }
.physical { width: 98px; margin-left: 3px; gap: 5px; }
.pill.physical svg { width: 15px; height: 19px; }
.physical span { -webkit-text-stroke: .35px #fff; letter-spacing: -.1px; }
.coords { margin-left: 4px; letter-spacing: -.37px; font-size: 12.500px; }
.navright { margin-left: auto; display: flex; align-items: center; gap: 1px; padding-right: 1px; }
.root { margin-right: 4px; }
.pill.clock { width: 82px; font-size: 13px; gap: 2px; }

.workspace { height: 725px; flex: none; display: grid; grid-template: 703px 20px / 1898px 20px; border: 1px solid #7a828f; background: #fff; }
.canvas { position: relative; }
.links { position: absolute; left: 0; top: 0; }
.cable { fill: none; stroke: #000; stroke-width: 2.800; }
.node { position: absolute; width: 80px; display: flex; flex-direction: column; align-items: center; }
.node svg { width: 44px; height: 36px; margin-bottom: 2px; }
.node span { line-height: 16px; letter-spacing: -.15px; transform: translateX(-.5px); }
.n-pc3 { left: 451px; top: 176px; }
.n-pc1 { left: 248px; top: 280px; }
.n-pc2 { left: 600px; top: 298px; }
.n-pc0 { left: 310px; top: 473px; }
.n-sw { left: 440.500px; top: 335px; }
.n-sw svg { width: 49px; height: 23px; }
.vtrack { grid-row: 1 / 3; grid-column: 2; background: #efefef; padding: 21px 0 0 7px; }
.vthumb { width: 6px; height: 115px; background: #858585; }
.htrack { background: #efefef; padding: 7px 0 0 21px; }
.hthumb { width: 879px; height: 6px; background: #858585; }

.time { margin: 0 1px 0 17px; border: 1px solid #00a7e1; width: 86px; height: 16px; line-height: 14px; white-space: nowrap; letter-spacing: -.05px; }
.timebar .pill.icon { margin-right: 1px; }
.modes { margin-left: auto; display: flex; gap: 3px; }
.modes .pill { gap: 1px; height: 29px; }
.realtime { width: 110px; padding-right: 2px; }
.simulation { width: 114px; padding-right: 2px; }
.simulation span { letter-spacing: -.1px; -webkit-text-stroke: .2px #fff; }

.bottom { height: 114px; flex: none; display: flex; background: #fff; }
.categories { width: 210px; flex: none; padding-top: 12px; }
.catrow { display: flex; padding-left: 2px; height: 30px; }
.catrow i { height: 30px; display: grid; place-items: center; }
.catrow svg { width: 29px; height: 29px; }
.catrow .c35 { width: 35px; } .catrow .c33 { width: 33px; } .catrow .c34 { width: 34px; }
.catrow i.on { width: 30px; margin: 0 2px 0 3px; background: #96f7fd; border: 1px solid #173a40; }
.catrow i.on svg { width: 28px; height: 28px; }
.filter { height: 24px; width: 204px; margin: 3px 0 3px 3px; border: 1px solid #e5e5e5; border-bottom-color: #868686; border-radius: 2px; }

.devices { width: 576px; flex: none; }
.tiles { height: 73px; display: flex; gap: 5px; padding: 2px 0 0 2px; overflow: hidden; border: 1px solid #7f8792; border-bottom: 0; }
.tile { width: 35px; height: 35px; flex: none; display: flex; flex-direction: column; align-items: center; justify-content: space-between; padding: 1px 0 1px; background: #e2e2e2; border: 1px solid #b4b4b4; border-radius: 5px; overflow: hidden; text-align: center; }
.tile svg { width: 27px; height: 23px; }
.tile span { font: 8.500px/8px "Open Sans", "Noto Sans", sans-serif; letter-spacing: -.35px; color: #111; white-space: nowrap; -webkit-text-stroke: .2px #111; }
.tile.two svg { height: 16px; }
.tile.two span { letter-spacing: -.25px; }
.tile.two span.small { font-size: 7.500px; line-height: 6px; letter-spacing: -.3px; }
.tile span.mid { letter-spacing: -.6px; }
.tile span.tight { letter-spacing: -.5px; transform: scaleX(.65); }
.dtrack { height: 21px; background: #efefef; border: 1px solid #7f8792; border-top: 0; padding: 7px 0 0 21px; }
.dthumb { width: 122px; height: 6px; background: #858585; }
.devname { height: 20px; border: 1px solid #000; text-align: center; line-height: 18px; }
.splitter { width: 22px; flex: none; margin: 0 1px; border-left: 3px solid #eee; border-right: 4px solid #efefef; display: grid; align-items: center; background: repeating-conic-gradient(#ececec 0 25%, #fff 0 50%) 0 0 / 2px 2px; box-shadow: inset 1px 1px #777; }
.splitter i { border: 5px solid transparent; border-left: 8px solid #666; border-right: 0; margin-left: 2px; width: 8px; }

.scenario { width: 161px; flex: none; display: flex; flex-direction: column; align-items: flex-start; padding: 8px 0 0 1px; }
.srow { display: flex; align-items: center; }
.srow.first { padding-left: 9px; gap: 10px; height: 30px; margin-bottom: 8px; }
.infobtn { width: 34px; height: 30px; border-radius: 7px; background: #0e274c; display: grid; place-items: center; }
.infobtn svg { width: 20px; height: 20px; }
.select { width: 92px; height: 22px; margin-top: 1px; display: flex; align-items: center; justify-content: space-between; padding: 0 6px 0 3px; border: 1px solid #e0e0e0; border-bottom-color: #868686; border-radius: 2px; }
.select span { letter-spacing: -.1px; }
.select svg { width: 10px; height: 6px; fill: none; stroke: #555; }
.srow.second { padding-left: 23px; gap: 25px; margin-bottom: 8px; }
.btn { height: 26px; padding: 0; border: 0; border-radius: 7px; background: #0e274c; color: #fff; font: 13px/26px "Liberation Sans", Arial, sans-serif; }
.new { width: 35px; } .del { width: 47px; } .toggle { width: 153px; letter-spacing: -.05px; }
.pdu { width: 949px; height: 112px; margin-top: 1px; border: 1px solid #7f8792; display: grid; grid-template-columns: 45px 79px 55px 81px 45px 45px 71px 63px 45px 45px 1fr; grid-template-rows: 26px; }
.pdu span { padding-left: 5px; line-height: 26px; border-right: 1px solid #e2e2e2; }

.taskbar { height: 60px; flex: none; display: flex; position: relative; background: linear-gradient(90deg, #232323, #232222 18%, #1c2427 30%, #1d2426 62%, #182629 80%, #1e2427); border-top: 1px solid #41484a; color: #fff; font: 14.500px/20px "Noto Sans", "Open Sans", sans-serif; }
.weather { width: 545px; flex: none; display: flex; padding: 6px 0 0 27px; gap: 4px; }
.weather svg { width: 33px; height: 36px; }
.weather text { font: 14px "Noto Sans", sans-serif; fill: #3b1418; }
.weather p { white-space: nowrap; letter-spacing: -.12px; padding-top: 2px; }
.weather .dim { color: #c2c2c2; padding: 0; }
.apps { display: flex; align-items: center; height: 58px; }
.app { width: 55px; height: 58px; display: grid; place-items: center; position: relative; }
.app svg { width: 30px; height: 30px; }
.app.running::after { content: ""; position: absolute; left: 24px; bottom: 5px; width: 8px; height: 4px; border-radius: 2px; background: #9a9fa1; }
.tm { font: bold 10px "Open Sans", sans-serif; fill: #fff; }
.rb { font: 600 12px "Open Sans", sans-serif; fill: #d9e8d4; }
.search { width: 275px; height: 40px; margin: 0 3px; border-radius: 20px; background: #3a4143; border: 1px solid #545b5d; display: flex; align-items: center; padding: 0 10px 0 14px; }
.mag { width: 20px; height: 20px; fill: none; stroke: #e8e8e8; stroke-width: 2; }
.search span { margin-left: 11px; font-size: 16px; color: #d0d2d2; letter-spacing: -.2px; }
.planet { width: 54px; height: 29px; margin-left: auto; }
.tray { height: 58px; margin-left: auto; display: flex; align-items: center; padding-right: 25px; }
.tray svg { fill: none; stroke: #fff; stroke-width: 1.500; }
.chev { width: 14px; height: 8px; stroke-width: 2; }
.tray .cloud, .tray .copilot { stroke: none; }
.cloud { width: 20px; height: 14px; margin-left: 23px; }
.lang { width: 50px; margin-left: 13px; text-align: center; letter-spacing: -.2px; }
.wifi { width: 20px; height: 16px; margin-left: 12px; }
.wifi circle, .bat .fill { fill: #fff; stroke: none; }
.vol { width: 20px; height: 14px; margin-left: 10px; }
.bat { width: 20px; height: 14px; margin-left: 10px; }
.clocktext { width: 90px; margin-left: 8px; text-align: right; letter-spacing: .2px; }
.bell { width: 17px; height: 19px; margin-left: 11px; }
.copilot { width: 30px; height: 30px; margin-left: 21px; }
.copilot text { font: bold 8px "Open Sans", sans-serif; fill: #222; }
```
